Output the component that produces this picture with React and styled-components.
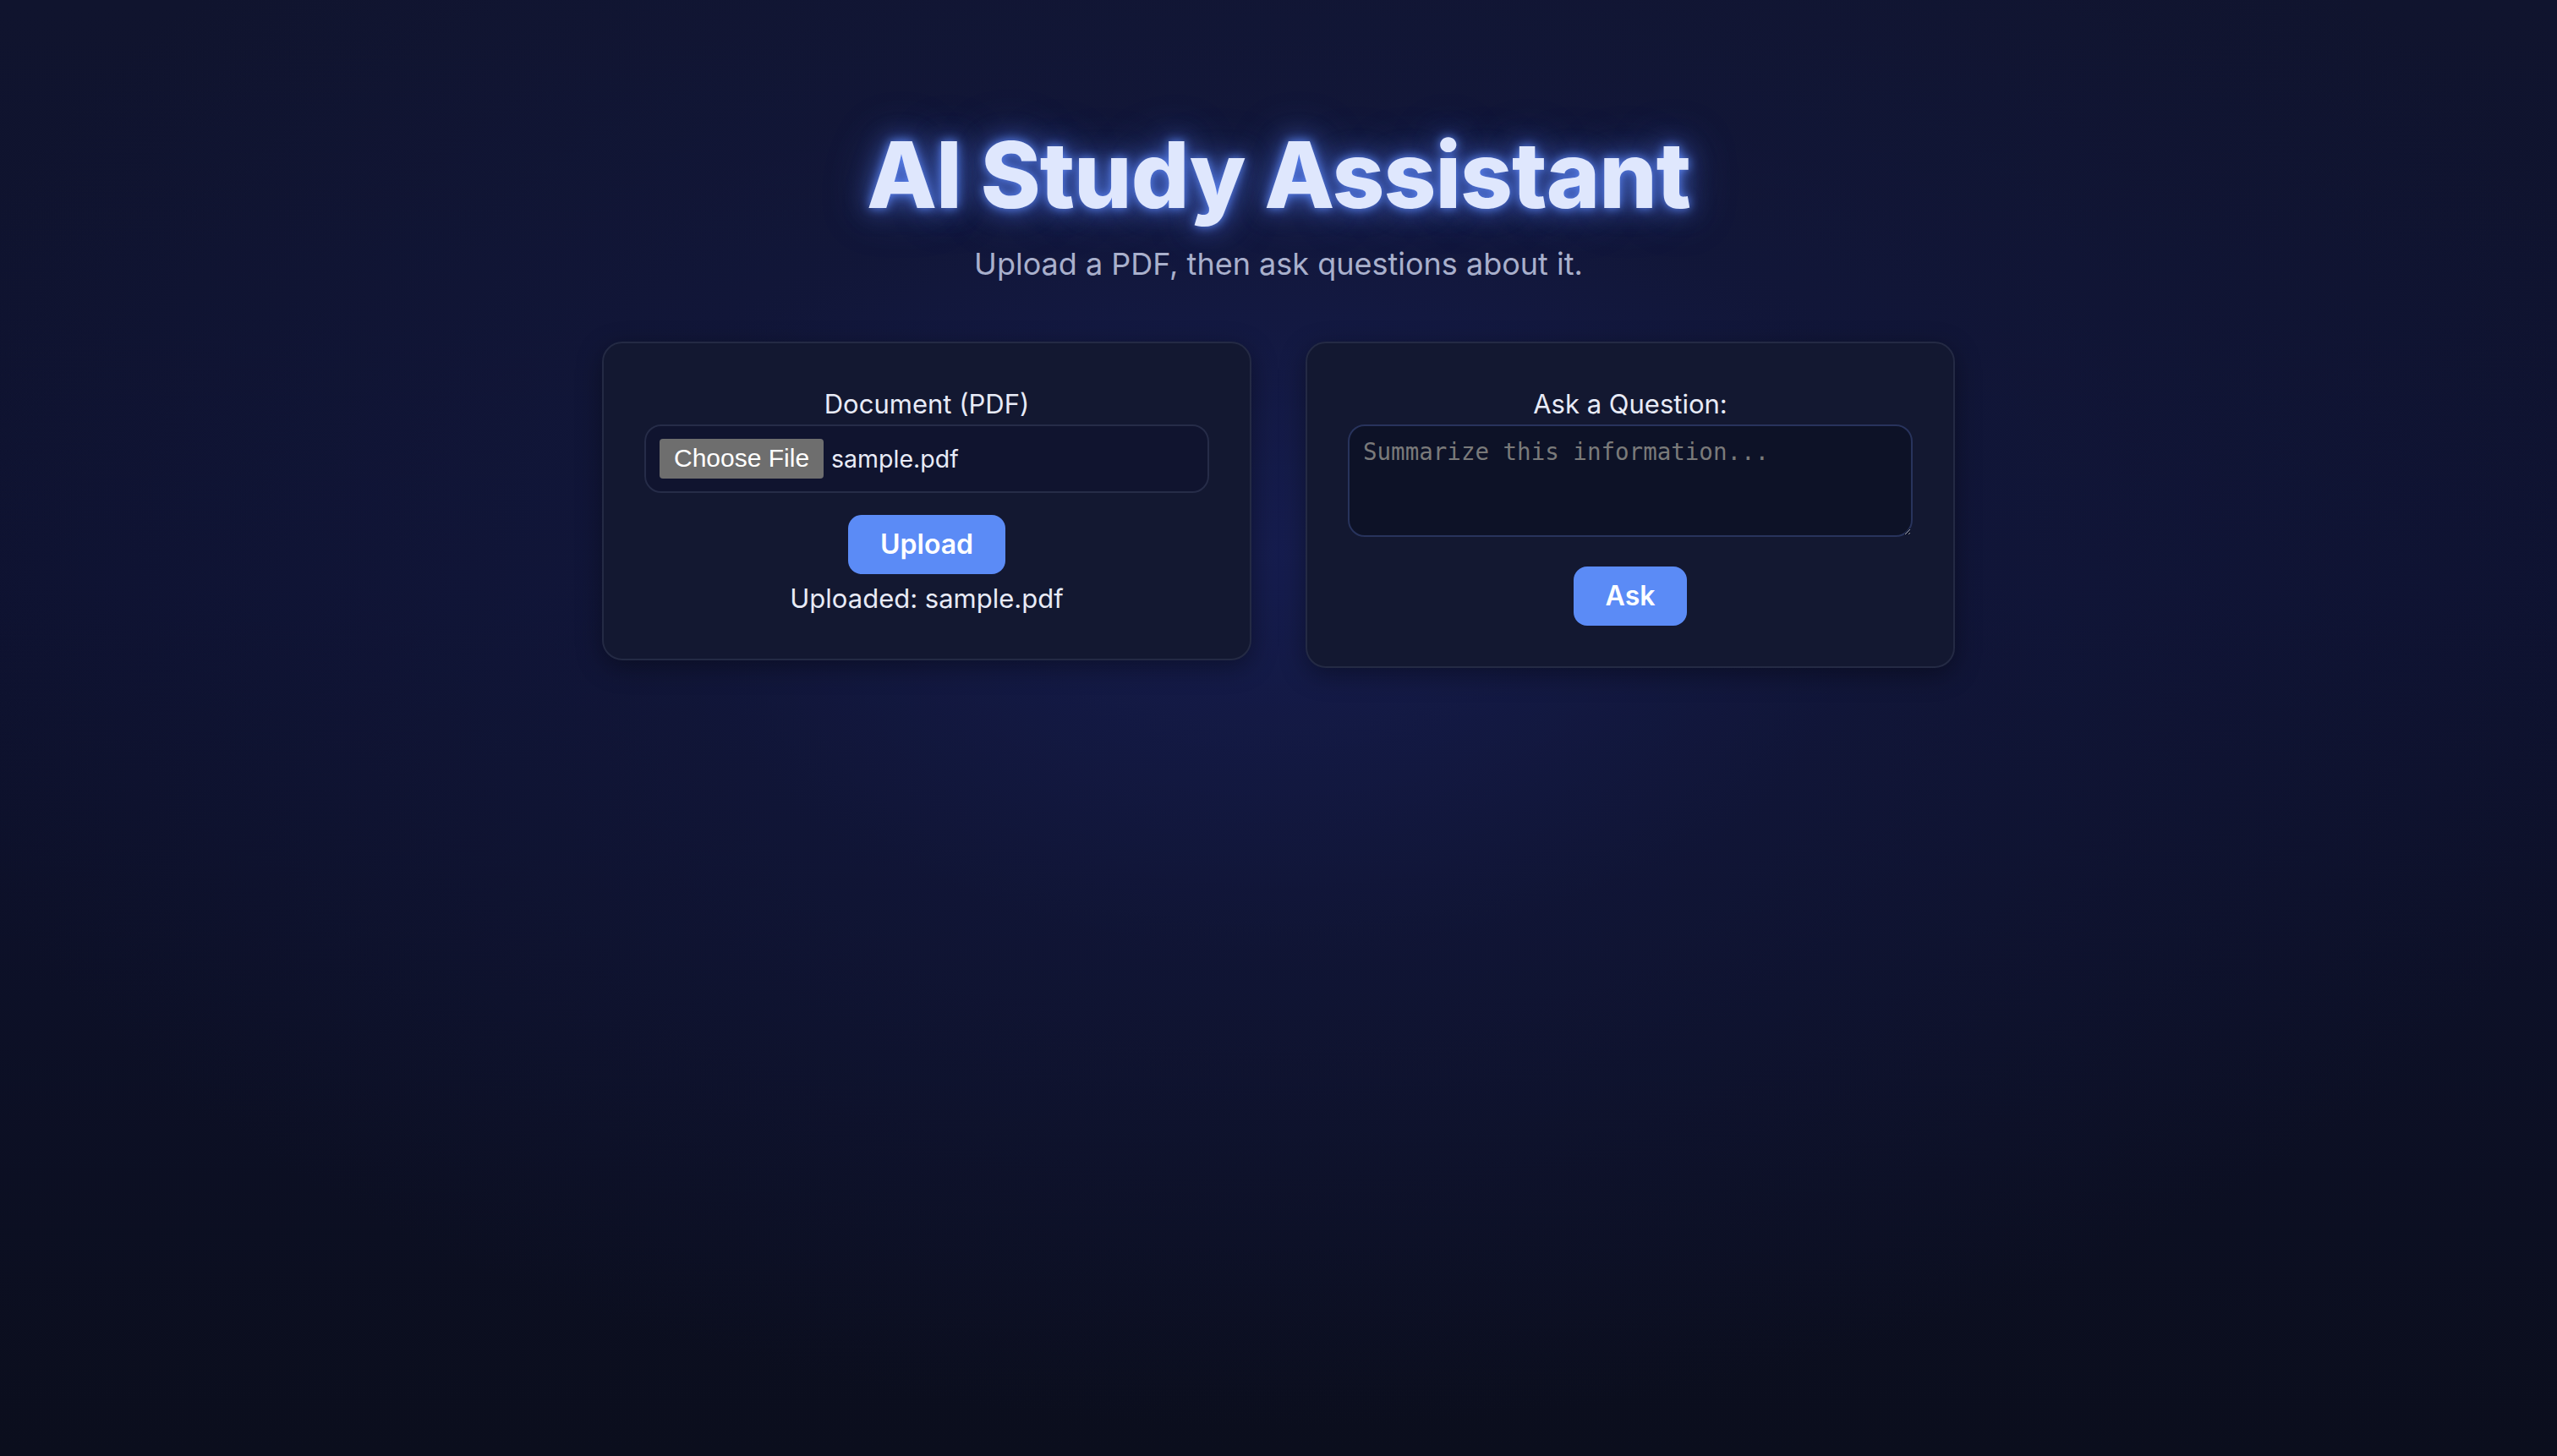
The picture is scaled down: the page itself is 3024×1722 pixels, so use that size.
import React from 'react';
import styled, { createGlobalStyle } from 'styled-components';

const GlobalStyle = createGlobalStyle`
    html, body {
        margin: 0;
        padding: 0;
        min-height: 100%;
    }
    body {
        background: #0b0e1d;
        font-family: Inter, "Noto Sans", sans-serif;
        color: #e6e9f5;
    }
`;

const App = () => (
    <Page>
        <GlobalStyle />
        <Header>
            <Title>AI Study Assistant</Title>
            <Subtitle>Upload a PDF, then ask questions about it.</Subtitle>
        </Header>
        <Cards>
            <Card>
                <Label>Document (PDF)</Label>
                <FileBox>
                    <ChooseButton type="button">Choose File</ChooseButton>
                    <FileName>sample.pdf</FileName>
                </FileBox>
                <PrimaryButton $gap={26}>Upload</PrimaryButton>
                <Status>Uploaded: sample.pdf</Status>
            </Card>
            <Card>
                <Label>Ask a Question:</Label>
                <Question placeholder="Summarize this information..." />
                <PrimaryButton $gap={35}>Ask</PrimaryButton>
            </Card>
        </Cards>
    </Page>
);

const Page = styled.div`
    min-height: 1722px;
    box-sizing: border-box;
    padding-top: 140px;
    background:
        radial-gradient(ellipse 55% 60% at 50% 38%, rgba(24, 32, 88, 0.75) 0%, rgba(20, 26, 68, 0.45) 45%, rgba(11, 14, 29, 0) 100%),
        linear-gradient(180deg, #10142e 0%, #0e1230 40%, #0b0e1d 100%);
`;

const Header = styled.header`
    display: flex;
    flex-direction: column;
    align-items: center;
    text-align: center;
`;

const Title = styled.h1`
    margin: 0;
    font-size: 108px;
    font-weight: 800;
    letter-spacing: -1px;
    line-height: 1.24;
    color: #dfe7fd;
    text-shadow:
        0 0 12px rgba(98, 140, 255, 0.9),
        0 0 30px rgba(88, 130, 245, 0.7),
        0 0 60px rgba(80, 120, 240, 0.4);
`;

const Subtitle = styled.p`
    margin: 16px 0 0;
    font-size: 36px;
    font-weight: 400;
    color: #a9b0cc;
`;

const Cards = styled.main`
    display: flex;
    justify-content: center;
    align-items: flex-start;
    gap: 64px;
    margin-top: 70px;
`;

const Card = styled.section`
    width: 768px;
    box-sizing: border-box;
    padding: 48px;
    display: flex;
    flex-direction: column;
    align-items: center;
    background: #131831;
    border: 2px solid #242a44;
    border-radius: 24px;
    box-shadow: 0 8px 30px rgba(0, 0, 0, 0.35);
`;

const Label = styled.label`
    font-size: 31px;
    line-height: 48px;
    color: #e8ebf7;
`;

const FileBox = styled.div`
    width: 100%;
    box-sizing: border-box;
    height: 81px;
    display: flex;
    align-items: center;
    padding: 0 16px;
    background: #10142f;
    border: 2px solid #262c48;
    border-radius: 20px;
`;

const ChooseButton = styled.button`
    height: 47px;
    padding: 0 17px;
    margin-right: 9px;
    border: none;
    border-radius: 4px;
    background: #6e6e6e;
    color: #ffffff;
    font-family: "Liberation Sans", Arial, sans-serif;
    font-size: 30px;
`;

const FileName = styled.span`
    font-size: 28.5px;
    color: #e8ebf7;
`;

const PrimaryButton = styled.button`
    margin-top: ${(p) => p.$gap}px;
    height: 70px;
    padding: 0 38px;
    border: none;
    border-radius: 16px;
    background: #5b8bf6;
    color: #ffffff;
    font-family: Inter, sans-serif;
    font-size: 32px;
    font-weight: 600;
`;

const Status = styled.p`
    margin: 6px 0 0;
    font-size: 31px;
    line-height: 46px;
    color: #e8ebf7;
`;

const Question = styled.textarea`
    display: block;
    width: 100%;
    height: 133px;
    box-sizing: border-box;
    padding: 14px 16px;
    background: #0d1227;
    border: 2px solid #28335c;
    border-radius: 20px;
    color: #e8ebf7;
    font-family: "DejaVu Sans Mono", monospace;
    font-size: 27.5px;
    outline: none;

    &::placeholder {
        color: #7a7a7a;
    }
`;

export default App;
